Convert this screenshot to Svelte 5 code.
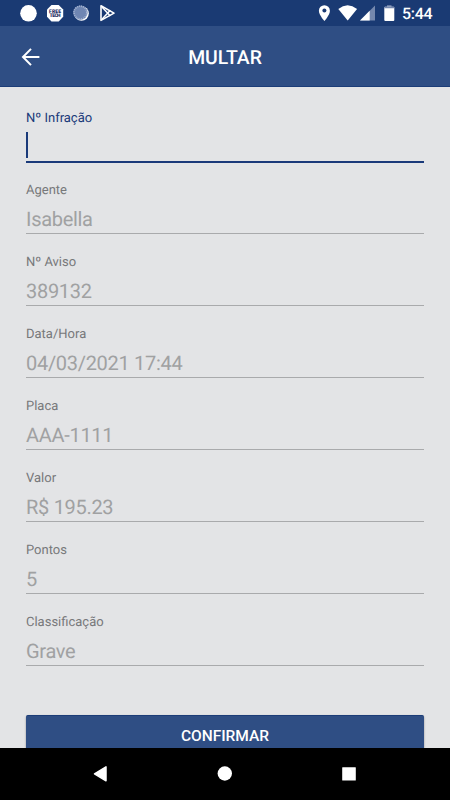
<script lang="ts">
  interface Field {
    label: string;
    value: string;
    active?: boolean;
  }

  const fields: Field[] = [
    { label: 'Nº Infração', value: '', active: true },
    { label: 'Agente', value: 'Isabella' },
    { label: 'Nº Aviso', value: '389132' },
    { label: 'Data/Hora', value: '04/03/2021 17:44' },
    { label: 'Placa', value: 'AAA-1111' },
    { label: 'Valor', value: 'R$ 195.23' },
    { label: 'Pontos', value: '5' },
    { label: 'Classificação', value: 'Grave' },
  ];
</script>

<div class="screen">
  <div class="status-bar">
    <svg class="notifications" width="120" height="26" viewBox="0 0 120 26">
      <circle cx="28.5" cy="13.3" r="8.3" fill="#fff" />
      <path d="M51.5 5h7.2l4.5 4.600v7.200l-4.500 4.600h-7.200L47 16.800V9.600z" fill="#fff" />
      <text x="55.1" y="12.6" class="badge-text" textLength="12">FREE</text>
      <text x="55.1" y="17.4" class="badge-text" textLength="11">TECH</text>
      <circle cx="81.5" cy="13.5" r="7.3" fill="#fff" />
      <circle cx="80.4" cy="12.6" r="7.2" fill="#6f86b3" />
      <circle cx="80.4" cy="12.6" r="6.4" fill="none" stroke="#a5b4d1" stroke-width="1.6" stroke-dasharray="1 1" />
      <path d="M101 5.8l13 7.3-13 7.300z" fill="none" stroke="#fff" stroke-width="1.6" stroke-linejoin="round" />
      <path d="M102 7l8.300 9M102 19.200l8.300-9" stroke="#fff" stroke-width="1.5" />
    </svg>
    <svg class="system" width="84" height="26" viewBox="316 0 84 26">
      <path d="M324.4 5.2a5.500 5.500 0 0 0-5.500 5.500c0 4.200 5.500 10.300 5.500 10.300s5.500-6.100 5.500-10.300a5.500 5.500 0 0 0-5.500-5.500z" fill="#fff" />
      <circle cx="324.4" cy="10.6" r="2" fill="#1a3a73" />
      <path d="M338.3 9q9.300-7.400 18.800 0l-9.400 11.600z" fill="#fff" />
      <path d="M375 5.500V20.500H360z" fill="#7588ae" />
      <path d="M369.700 10.800V20.500H360z" fill="#fff" />
      <path d="M387 5.200h4.500v2.300H387z" fill="#7588ae" />
      <rect x="384.3" y="6.8" width="10" height="14.2" rx="1" fill="#fff" />
      <path d="M384.300 8.200V7.500q0-.7.700-.7h8.600q.7 0 .7.700v.7z" fill="#7588ae" />
    </svg>
    <span class="clock">5:44</span>
  </div>

  <header>
    <button class="back" aria-label="Voltar">
      <svg width="20" height="20" viewBox="0 0 20 20">
        <path d="M18.4 10H2.5M10 1.900L2 10l8 8.100" fill="none" stroke="#fff" stroke-width="2" />
      </svg>
    </button>
    <h1>MULTAR</h1>
  </header>

  <main>
    {#each fields as field}
      <div class="field" class:active={field.active}>
        <div class="label">{field.label}</div>
        <div class="value">
          {#if field.active}
            <span class="caret"></span>
          {:else}
            {field.value}
          {/if}
        </div>
      </div>
    {/each}
    <button class="confirm">CONFIRMAR</button>
  </main>

  <nav>
    <svg width="450" height="52" viewBox="0 0 450 52">
      <path d="M94.5 25.800L106 18.800V32.800z" fill="#fff" stroke="#fff" stroke-width="1.5" stroke-linejoin="round" />
      <circle cx="224.8" cy="25.5" r="7.2" fill="#fff" />
      <rect x="342.2" y="19.2" width="13.6" height="13.4" rx=".5" fill="#fff" />
    </svg>
  </nav>
</div>

<style>
  :global(body) {
    margin: 0;
    overflow: hidden;
  }

  .screen {
    display: flex;
    flex-direction: column;
    width: 450px;
    height: 800px;
    overflow: hidden;
    background: #e3e4e6;
    font-family: Roboto, 'Noto Sans', sans-serif;
    text-rendering: geometricPrecision;
  }

  .status-bar {
    flex: none;
    display: flex;
    align-items: center;
    height: 26px;
    background: #1a3a73;
    color: #fff;
  }

  .system {
    margin-left: auto;
  }

  .badge-text {
    font-size: 5px;
    font-weight: 900;
    text-anchor: middle;
    fill: #1a2c5e;
  }

  .clock {
    width: 48px;
    padding: 2px 0 0 2px;
    font-size: 16px;
    font-weight: 500;
    letter-spacing: -0.3px;
    line-height: 26px;
  }

  header {
    flex: none;
    display: grid;
    grid-template-columns: 61px 1fr 61px;
    align-items: center;
    box-sizing: border-box;
    height: 61px;
    padding-top: 2px;
    background: #2f4e84;
    border-bottom: 1px solid #1c3d78;
  }

  .back {
    display: flex;
    margin: 0 0 0 21px;
    padding: 0;
    border: none;
    background: none;
  }

  h1 {
    margin: 0;
    padding-top: 2px;
    color: #fff;
    font-size: 19.4px;
    font-weight: 500;
    line-height: 26px;
    text-align: center;
  }

  main {
    flex: 1;
    min-height: 0;
    padding: 22px 26px 0;
    overflow: hidden;
  }

  .field {
    height: 72px;
  }

  .label {
    height: 16px;
    color: #77787a;
    font-size: 13px;
    line-height: 20px;
  }

  .value {
    box-sizing: border-box;
    height: 37px;
    padding-top: 7px;
    border-bottom: 1px solid #a9aaac;
    color: #a0a1a2;
    font-size: 20px;
    letter-spacing: -0.3px;
    line-height: 30px;
  }

  .active .label {
    color: #1a3a7a;
  }

  .active .value {
    height: 38px;
    border-bottom: 2px solid #1a3a7a;
  }

  .caret {
    display: block;
    width: 2px;
    height: 26px;
    background: #1a3a7a;
  }

  .confirm {
    display: block;
    width: 100%;
    height: 40px;
    margin-top: 30px;
    padding: 0;
    border: none;
    border-top: 1px solid #1c3d78;
    border-radius: 2px;
    background: #2f4e84;
    box-shadow: 0 1px 2px rgba(0, 0, 0, 0.4);
    color: #fff;
    font-family: inherit;
    font-size: 15.5px;
    font-weight: 500;
  }

  nav {
    flex: none;
    height: 52px;
    background: #000;
  }

  nav svg {
    display: block;
  }
</style>
